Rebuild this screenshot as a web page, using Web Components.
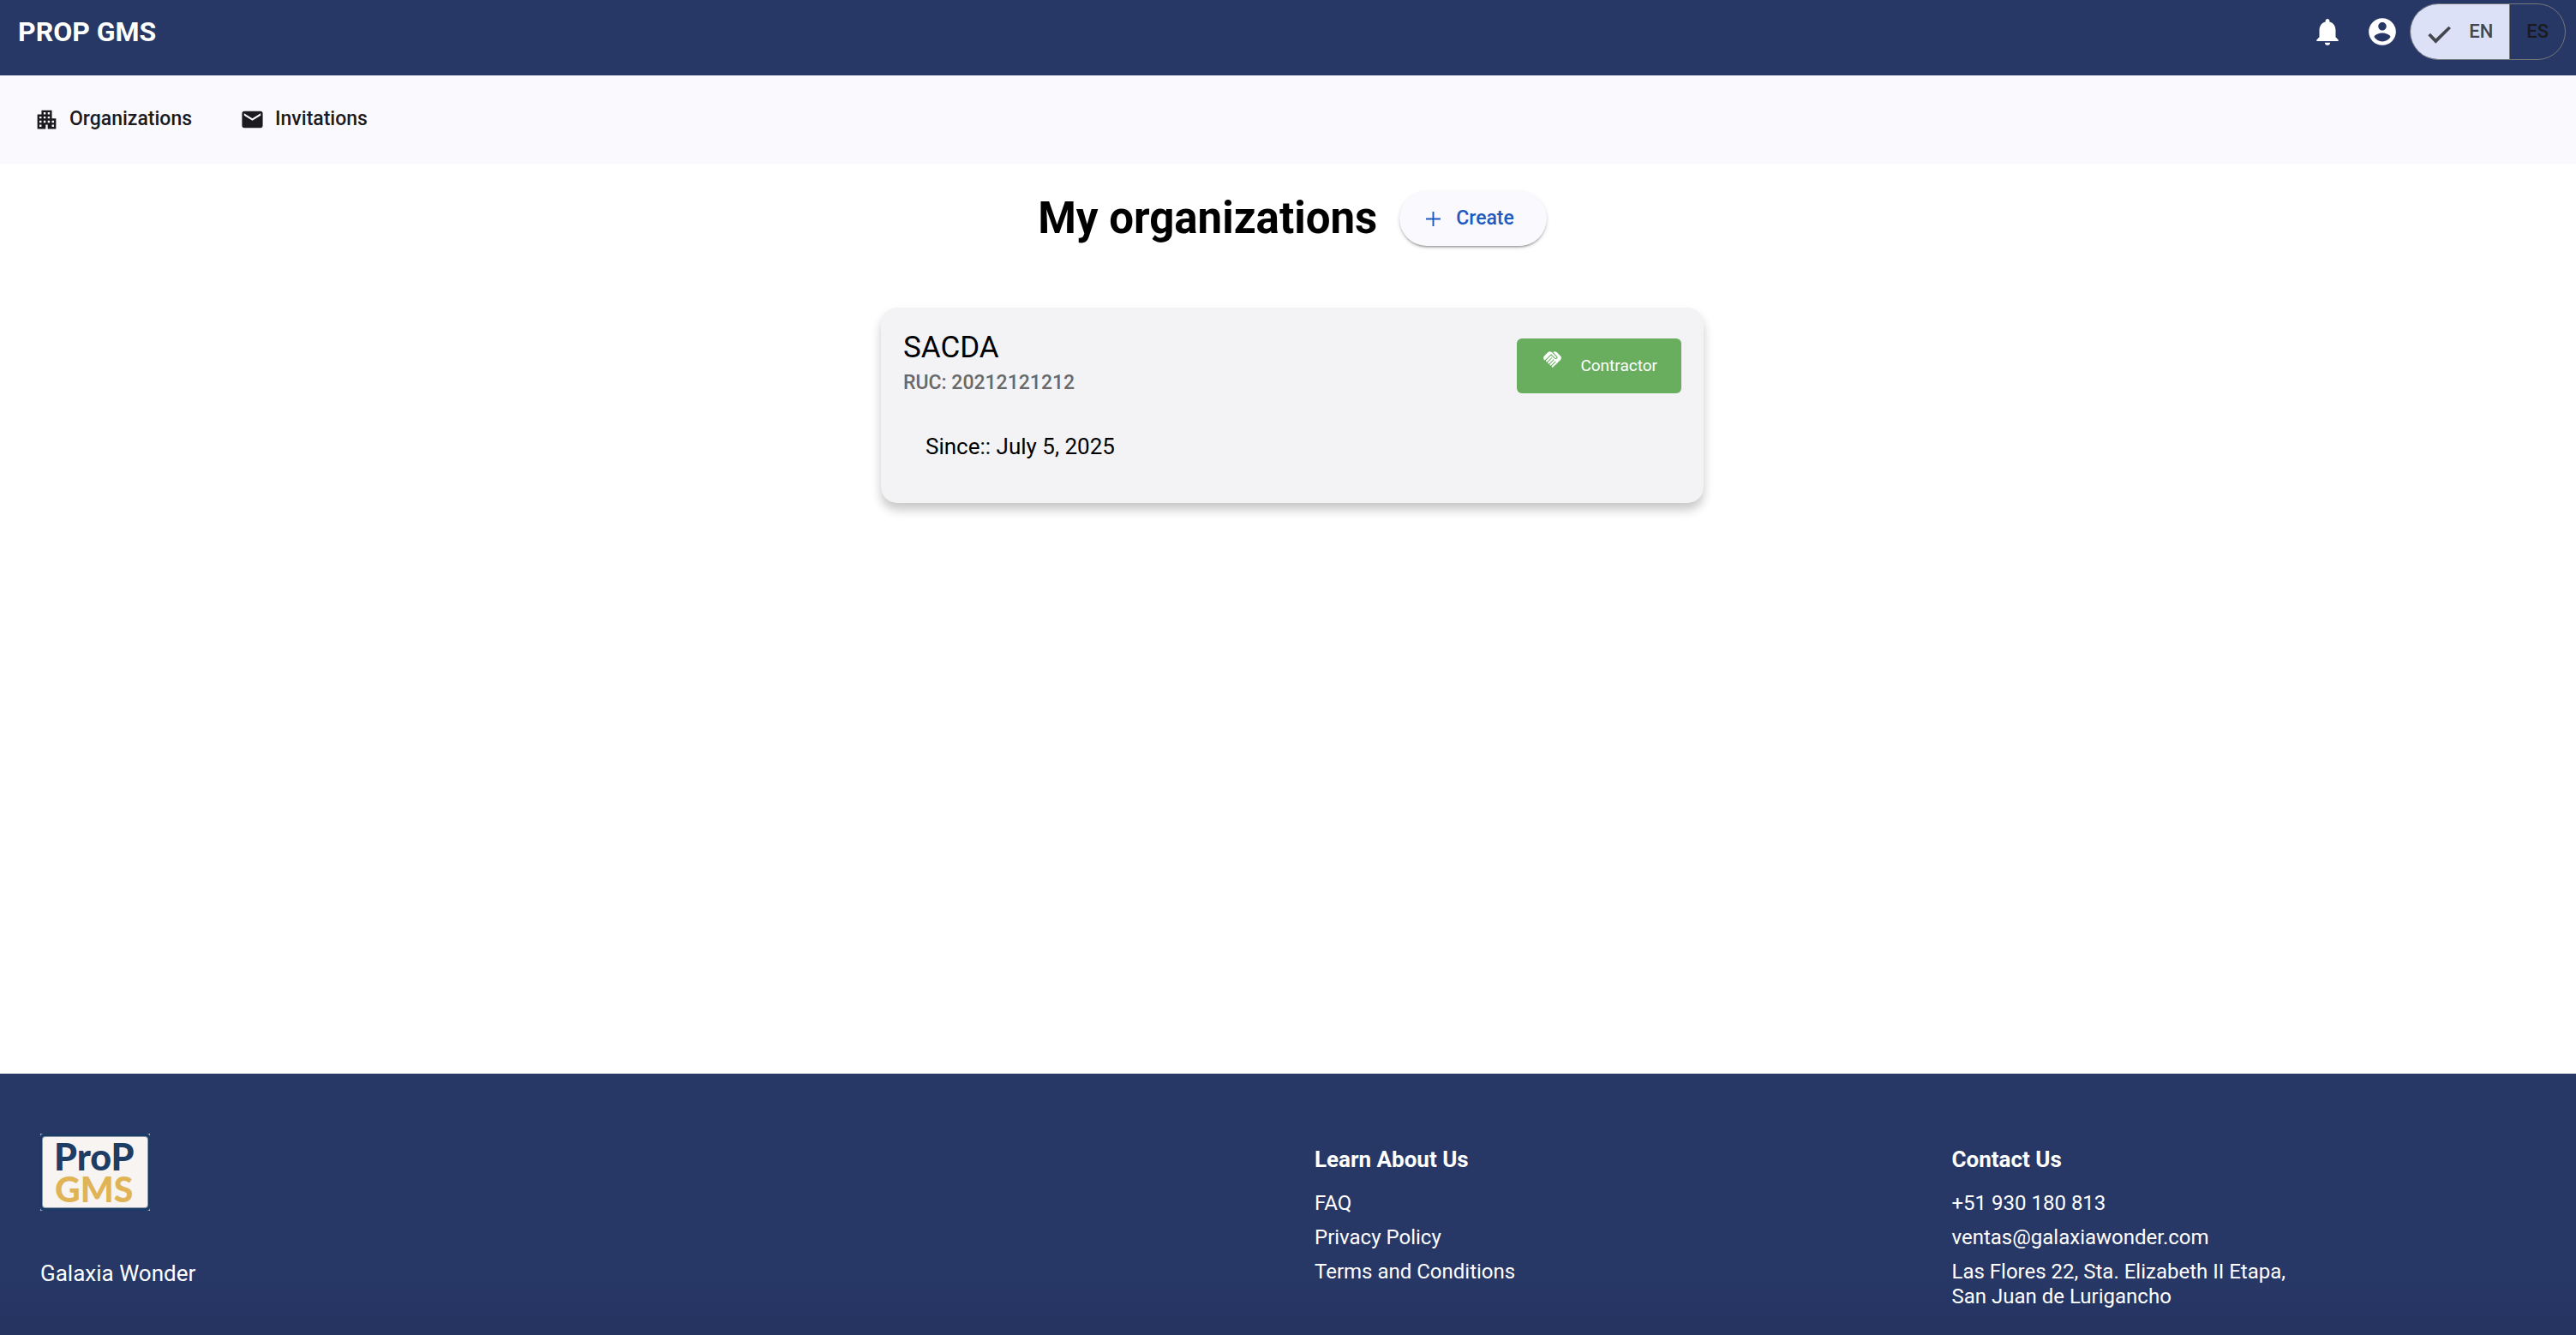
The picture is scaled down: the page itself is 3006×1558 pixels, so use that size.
<!DOCTYPE html>
<html lang="en">
<head>
<meta charset="utf-8">
<title>PROP GMS</title>
<style>
  html, body { margin: 0; }
  body { font-family: Roboto, "Liberation Sans", sans-serif; color: #000; background: #fff; }
</style>
</head>
<body>
<gms-app></gms-app>
<script>
const define = (name, css, html, setup) => {
  const tpl = document.createElement('template');
  tpl.innerHTML = `<style>*{box-sizing:border-box}${css}</style>${html}`;
  customElements.define(name, class extends HTMLElement {
    constructor() {
      super();
      this.attachShadow({ mode: 'open' }).append(tpl.content.cloneNode(true));
    }
    connectedCallback() { if (setup) setup(this, this.shadowRoot); }
  });
};

const ICONS = {
  apartment: 'M17 11V3H7v4H3v14h8v-4h2v4h8V11h-4zM7 19H5v-2h2v2zm0-4H5v-2h2v2zm0-4H5V9h2v2zm4 4H9v-2h2v2zm0-4H9V9h2v2zm0-4H9V5h2v2zm4 8h-2v-2h2v2zm0-4h-2V9h2v2zm0-4h-2V5h2v2zm4 12h-2v-2h2v2zm0-4h-2v-2h2v2z',
  mail: 'M20 4H4c-1.1 0-1.99.9-1.99 2L2 18c0 1.1.9 2 2 2h16c1.1 0 2-.9 2-2V6c0-1.1-.9-2-2-2zm0 4l-8 5-8-5V6l8 5 8-5v2z',
  notifications: 'M12 22c1.1 0 2-.9 2-2h-4c0 1.1.89 2 2 2zm6-6v-5c0-3.07-1.64-5.64-4.5-6.32V4c0-.83-.67-1.5-1.5-1.5s-1.5.67-1.5 1.5v.68C7.63 5.36 6 7.92 6 11v5l-2 2v1h16v-1l-2-2z',
  account: 'M12 2C6.48 2 2 6.48 2 12s4.48 10 10 10 10-4.48 10-10S17.52 2 12 2zm0 3c1.66 0 3 1.34 3 3s-1.34 3-3 3-3-1.34-3-3 1.34-3 3-3zm0 14.2c-2.5 0-4.71-1.28-6-3.22.03-1.99 4-3.08 6-3.08 1.99 0 5.97 1.09 6 3.08-1.29 1.94-3.5 3.22-6 3.22z',
  add: 'M19 12.8h-6.2V19h-1.6v-6.2H5v-1.6h6.2V5h1.6v6.2H19z',
  check: 'M1.1 12.7L3.3 10.5L8.5 16L21 3.9L23.2 5.8L8.5 20.4z',
  handshake: 'M16.48,10.41c-0.39,0.39-1.04,0.39-1.43,0l-4.47-4.46l-7.05,7.04l-0.66-0.63c-1.17-1.17-1.17-3.07,0-4.24l4.24-4.24c1.17-1.17,3.07-1.17,4.24,0L16.48,9C16.87,9.39,16.87,10.02,16.48,10.41z M17.18,8.29c0.78,0.78,0.78,2.05,0,2.83c-1.27,1.27-2.61,0.22-2.83,0l-3.76-3.76l-5.57,5.57c-0.39,0.39-0.39,1.02,0,1.41c0.39,0.39,1.02,0.39,1.42,0l4.62-4.62l0.71,0.71l-4.62,4.62c-0.39,0.39-0.39,1.02,0,1.41c0.39,0.39,1.02,0.39,1.42,0l4.62-4.62l0.71,0.71l-4.62,4.62c-0.39,0.39-0.39,1.02,0,1.41c0.39,0.39,1.02,0.39,1.41,0l4.62-4.62l0.71,0.71l-4.62,4.62c-0.39,0.39-0.39,1.02,0,1.41c0.39,0.39,1.02,0.39,1.41,0l8.32-8.34c1.17-1.17,1.17-3.07,0-4.24l-4.24-4.24c-1.15-1.15-3.01-1.17-4.18-0.06L17.18,8.29z'
};

define('gms-icon',
  `:host{display:block;flex:none;width:29px;height:29px}
   svg{display:block;width:100%;height:100%;fill:currentColor}`,
  `<svg viewBox="0 0 24 24" aria-hidden="true"><path/></svg>`,
  (el, root) => root.querySelector('path').setAttribute('d', ICONS[el.getAttribute('name')]));

define('gms-language-toggle',
  `:host{display:flex;height:66px;border:1px solid #747779;border-radius:33px;overflow:hidden}
   button{display:flex;align-items:center;gap:20px;padding:0 19px;border:0;background:none;
     font:500 22px/26px Roboto,sans-serif;color:#1b1b1f}
   button+button{border-left:1px solid #747779}
   button[aria-pressed=true]{background:#dce1f7;color:#44474e}
   gms-icon{margin-top:6px}`,
  `<button type="button" aria-pressed="true"><gms-icon name="check"></gms-icon>EN</button>
   <button type="button" aria-pressed="false">ES</button>`);

define('gms-header',
  `:host{display:flex;align-items:center;justify-content:space-between;padding:4px 12px 18px 21px;background:#273766;color:#fff}
   h1{margin:0;font:700 32px/38px Roboto,sans-serif}
   .actions{display:flex;align-items:center}
   .icon{display:flex;align-items:center;justify-content:center;width:64px;height:64px;padding:0;border:0;background:none;color:#fff}
   .icon gms-icon{width:38px;height:38px}`,
  `<h1>PROP GMS</h1>
   <div class="actions">
     <button class="icon" type="button" aria-label="Notifications"><gms-icon name="notifications"></gms-icon></button>
     <button class="icon" type="button" aria-label="Account"><gms-icon name="account"></gms-icon></button>
     <gms-language-toggle></gms-language-toggle>
   </div>`);

define('gms-nav-link',
  `:host{display:block}
   a{display:flex;align-items:center;gap:12px;height:64px;padding:0 28px;font:500 23px/28px Roboto,sans-serif;color:#1b1b1f;text-decoration:none}`,
  `<a href="#"><slot name="icon"></slot><span><slot></slot></span></a>`);

define('gms-nav',
  `:host{display:block;background:#faf9fe}
   nav{display:flex;align-items:center;padding:19px 12px 20px}`,
  `<nav>
     <gms-nav-link><gms-icon slot="icon" name="apartment"></gms-icon>Organizations</gms-nav-link>
     <gms-nav-link><gms-icon slot="icon" name="mail"></gms-icon>Invitations</gms-nav-link>
   </nav>`);

define('gms-elevated-button',
  `:host{display:block}
   button{display:flex;align-items:center;gap:12px;height:64px;padding:0 38px 0 25px;border:0;border-radius:32px;
     background:#faf9fe;color:#1f5bbf;font:500 23px/28px Roboto,sans-serif;
     box-shadow:0 3px 2px -2px rgba(0,0,0,.2),0 2px 2px rgba(0,0,0,.14),0 2px 5px rgba(0,0,0,.12)}`,
  `<button type="button"><gms-icon name="add"></gms-icon><slot></slot></button>`);

define('gms-role-button',
  `:host{display:block}
   button{display:flex;align-items:center;gap:20px;height:64px;padding:0 28px 0 29px;border:0;border-radius:6px;
     background:#69ae5e;color:#fff;font:400 19px/22px Roboto,sans-serif}
   gms-icon{width:25px;height:25px;margin-bottom:14px}`,
  `<button type="button"><gms-icon name="handshake"></gms-icon><slot></slot></button>`);

define('gms-organization-card',
  `:host{display:block;width:100%;max-width:960px;border-radius:19px;background:#f3f3f6;
     box-shadow:0 8px 12px rgba(0,0,0,.22)}
   header{display:flex;align-items:center;justify-content:space-between;padding:26px 26px 0}
   h3,p{margin:0}
   h3{font-weight:400;font-size:35px;line-height:41px}
   .ruc{font-weight:500;font-size:23px;line-height:42px;color:#696969}
   .body{padding:38px 52px 51px;font-size:26px;line-height:30px}`,
  `<header>
     <div><h3><slot name="name"></slot></h3><p class="ruc"><slot name="ruc"></slot></p></div>
     <gms-role-button><slot name="role"></slot></gms-role-button>
   </header>
   <p class="body"><slot name="since"></slot></p>`);

define('gms-organizations',
  `:host{display:flex;flex-direction:column;align-items:center;gap:72px;flex:1;padding:32px 0 32px 10px}
   .title{display:flex;align-items:center;gap:26px}
   h2{margin:0;font-weight:700;font-size:51px;line-height:60px}`,
  `<div class="title"><h2>My organizations</h2><gms-elevated-button>Create</gms-elevated-button></div>
   <gms-organization-card>
     <span slot="name">SACDA</span>
     <span slot="ruc">RUC: 20212121212</span>
     <span slot="role">Contractor</span>
     <span slot="since">Since:: July 5, 2025</span>
   </gms-organization-card>`);

define('gms-logo',
  `:host{display:block;width:128px;height:90px}
   svg{display:block;width:100%;height:100%}
   text{font-family:Lato,sans-serif;font-weight:900}`,
  `<svg viewBox="0 0 128 90" role="img" aria-label="ProP GMS">
     <rect width="128" height="90" fill="#b9c0cf"/>
     <rect width="128" height="90" rx="4" fill="#1c3a66"/>
     <rect x="2" y="3" width="124" height="84" rx="4" fill="#8795ab"/>
     <rect x="3" y="4" width="122" height="82" rx="3" fill="#f7f4f1"/>
     <text x="16" y="43" font-size="43" fill="#1e3d64">ProP</text>
     <text x="17" y="80" font-size="41" fill="#e0b456">GMS</text>
   </svg>`);

define('gms-footer',
  `:host{display:grid;grid-template-columns:2fr 1fr 1fr;padding:70px 16px 30px;color:#fff;
     background:linear-gradient(#273766,#243360) bottom/100% 60px no-repeat #273766}
   section{padding:0 31px}
   .links{padding-top:15px}
   gms-logo{margin-bottom:58px}
   p,h4,ul{margin:0;padding:0}
   .brand{font-size:26px;line-height:30px}
   h4{font-weight:700;font-size:26px;line-height:30px;margin-bottom:22px}
   ul{display:flex;flex-direction:column;gap:11px;list-style:none;font-size:24px;line-height:29px}
   a{color:inherit;text-decoration:none}`,
  `<section><gms-logo></gms-logo><p class="brand">Galaxia Wonder</p></section>
   <section class="links"><h4>Learn About Us</h4>
     <ul><li><a href="#">FAQ</a></li><li><a href="#">Privacy Policy</a></li><li><a href="#">Terms and Conditions</a></li></ul></section>
   <section class="links"><h4>Contact Us</h4>
     <ul><li><a href="tel:+51930180813">+51 930 180 813</a></li><li><a href="mailto:ventas@galaxiawonder.com">ventas@galaxiawonder.com</a></li><li>Las Flores 22, Sta. Elizabeth II Etapa,<br>San Juan de Lurigancho</li></ul></section>`);

define('gms-app',
  `:host{display:flex;flex-direction:column;min-height:100vh}`,
  `<gms-header></gms-header><gms-nav></gms-nav><gms-organizations></gms-organizations><gms-footer></gms-footer>`);
</script>
</body>
</html>
